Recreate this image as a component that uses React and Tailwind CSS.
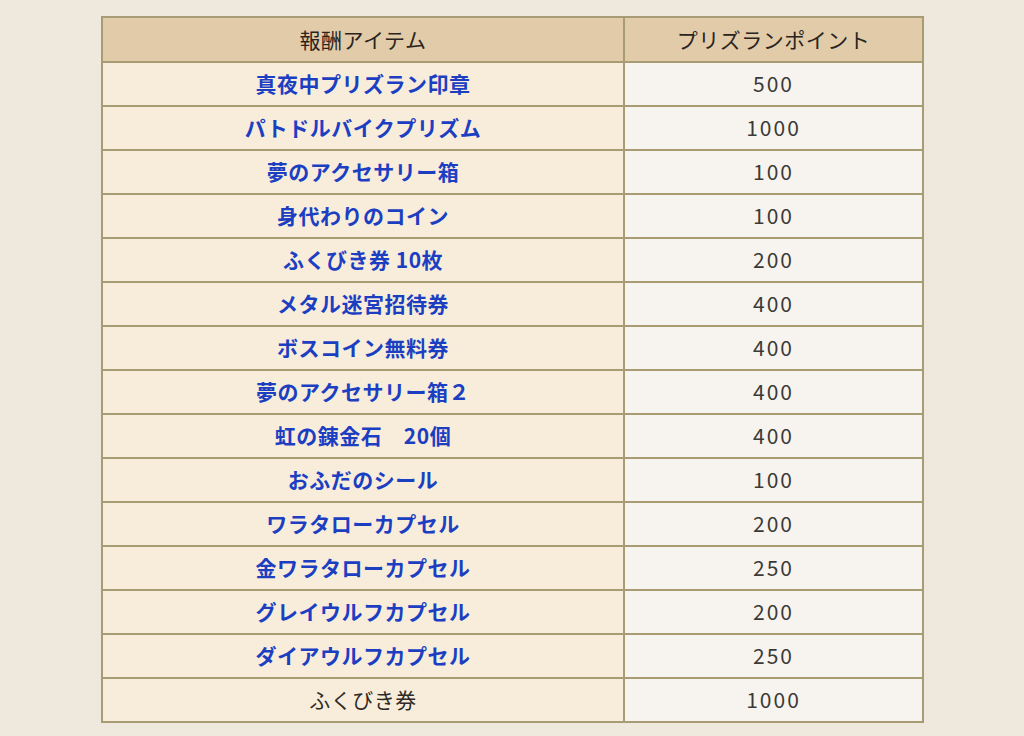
import React from 'react'

const rows = [
  ['真夜中プリズラン印章', '500', true],
  ['パトドルバイクプリズム', '1000', true],
  ['夢のアクセサリー箱', '100', true],
  ['身代わりのコイン', '100', true],
  ['ふくびき券 10枚', '200', true],
  ['メタル迷宮招待券', '400', true],
  ['ボスコイン無料券', '400', true],
  ['夢のアクセサリー箱２', '400', true],
  ['虹の錬金石　20個', '400', true],
  ['おふだのシール', '100', true],
  ['ワラタローカプセル', '200', true],
  ['金ワラタローカプセル', '250', true],
  ['グレイウルフカプセル', '200', true],
  ['ダイアウルフカプセル', '250', true],
  ['ふくびき券', '1000', false],
]

export default function App() {
  return (
    <div
      className="w-[1024px] h-[736px] bg-[#efe8dd] pt-[16px] pl-[101px] overflow-hidden"
      style={{ fontFamily: '"Noto Sans CJK JP", "Noto Sans", sans-serif' }}
    >
      <table className="w-[823px] border-collapse border-2 border-[#a89c74]">
        <thead>
          <tr className="h-[45px] bg-[#e2cba8]">
            <th className="w-[522px] border-2 border-[#a89c74] text-[21px] tracking-[0.5px] font-normal text-[#2a2420]">報酬アイテム</th>
            <th className="border-2 border-[#a89c74] text-[21px] tracking-[0.5px] font-normal text-[#2a2420]">プリズランポイント</th>
          </tr>
        </thead>
        <tbody>
          {rows.map(([name, pt, link]) => (
            <tr key={name} className="h-[44px]">
              <td
                className={
                  'bg-[#f8eddb] border-2 border-[#a89c74] text-center text-[21px] tracking-[0.5px] ' +
                  (link ? 'font-bold text-[#1c3fc2]' : 'text-[#2e2a26]')
                }
              >
                {name}
              </td>
              <td className="bg-[#f7f4ef] border-2 border-[#a89c74] text-center text-[21px] tracking-[2px] text-[#3c3a38]">
                {pt}
              </td>
            </tr>
          ))}
        </tbody>
      </table>
    </div>
  )
}
